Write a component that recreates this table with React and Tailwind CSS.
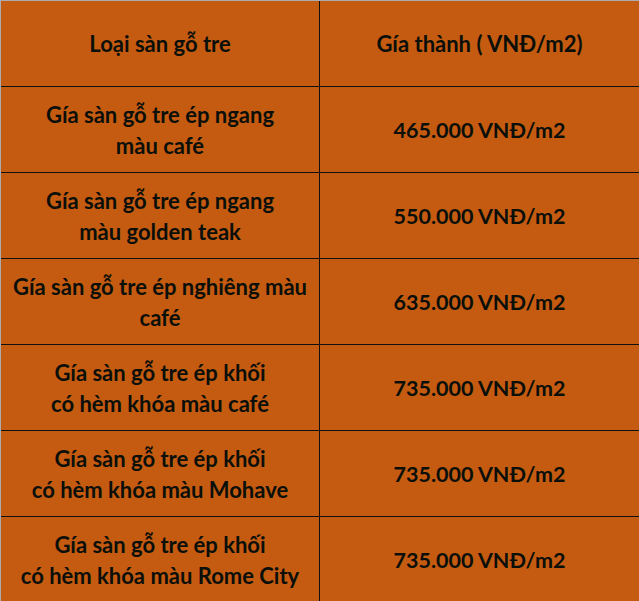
import React from "react";

const rows = [
  [["Gía sàn gỗ tre ép ngang", "màu café"], "465.000 VNĐ/m2"],
  [["Gía sàn gỗ tre ép ngang", "màu golden teak"], "550.000 VNĐ/m2"],
  [["Gía sàn gỗ tre ép nghiêng màu", "café"], "635.000 VNĐ/m2"],
  [["Gía sàn gỗ tre ép khối", "có hèm khóa màu café"], "735.000 VNĐ/m2"],
  [["Gía sàn gỗ tre ép khối", "có hèm khóa màu Mohave"], "735.000 VNĐ/m2"],
  [["Gía sàn gỗ tre ép khối", "có hèm khóa màu Rome City"], "735.000 VNĐ/m2"],
];

export default function App() {
  return (
    <div
      className="w-[639px] h-[601px] overflow-hidden bg-[#C55A11] text-[#0a0f0a] font-bold border-t border-l border-t-[#a9adb2] border-l-[#a9adb2]"
      style={{ fontFamily: "Lato, 'Liberation Sans', sans-serif" }}
    >
      <div className="grid grid-cols-[319px_319px] h-[86px] border-b border-[#111]">
        <div className="border-r border-[#111] flex items-center justify-center text-[22px] leading-[30px]">
          Loại sàn gỗ tre
        </div>
        <div className="flex items-center justify-center text-[22px] leading-[30px]">
          Gía thành ( VNĐ/m2)
        </div>
      </div>
      {rows.map(([left, right], i) => (
        <div key={i} className="grid grid-cols-[319px_319px] h-[86px] border-b border-[#111]">
          <div className="border-r border-[#111] flex flex-col items-center justify-center text-center text-[22px] leading-[31px]">
            <span>{left[0]}</span>
            <span>{left[1]}</span>
          </div>
          <div className="flex items-center justify-center text-[21.5px] leading-[30px]">
            {right}
          </div>
        </div>
      ))}
    </div>
  );
}
